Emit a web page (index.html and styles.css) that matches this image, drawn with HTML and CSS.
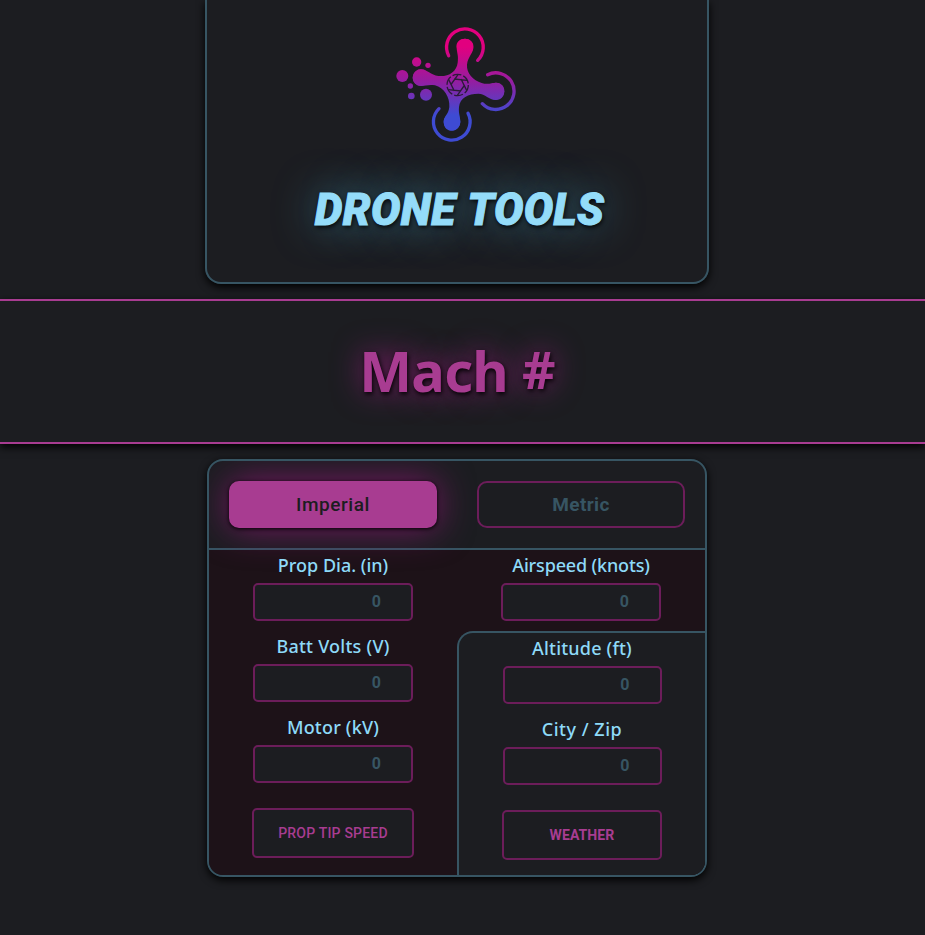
FILE: index.html
```
<!DOCTYPE html>
<html lang="en">
<head>
<meta charset="utf-8">
<title>Drone Tools</title>
<link rel="stylesheet" href="styles.css">
</head>
<body>
<header class="brand">
  <svg class="logo" viewBox="0 0 435 420" aria-hidden="true">
    <defs>
      <linearGradient id="g" gradientUnits="userSpaceOnUse" x1="0" y1="95" x2="0" y2="300">
        <stop offset="0" stop-color="#e2007f"/>
        <stop offset=".5" stop-color="#961da0"/>
        <stop offset="1" stop-color="#3e4bd3"/>
      </linearGradient>
    </defs>
    <g fill="url(#g)">
      <path d="M215 100C208 62 271 62 265 100C263 117 249 125 246 149C244 174 264 195 290 204C309 210 321 203 334 203C367 204 366 254 333 255C312 256 302 236 280 236C250 237 225 247 222 276C220 295 226 304 226 320C224 356 177 357 176 321C176 304 190 300 193 276C195 247 177 218 150 211C131 208 122 213 108 213C76 212 75 166 107 163C125 162 137 181 160 183C190 186 215 170 218 143C221 122 216 115 215 100Z"/>
      <circle cx="240" cy="96" r="24.500"/><circle cx="108" cy="188" r="25"/>
      <circle cx="332" cy="229" r="25.500"/><circle cx="201" cy="321" r="25"/>
      <circle cx="95" cy="141" r="14"/><circle cx="129" cy="151" r="8"/>
      <circle cx="52" cy="183" r="18"/><circle cx="76" cy="213" r="8"/>
      <circle cx="79" cy="243" r="10"/><circle cx="123" cy="239" r="18"/>
    </g>
    <g fill="none" stroke="url(#g)" stroke-width="10" stroke-linecap="round">
      <path d="M191 122A55 55 0 1 1 278 136"/>
      <path d="M308 179A55 55 0 1 1 292 266"/>
      <path d="M162 281A55 55 0 1 0 249 295"/>
    </g>
    <g fill="none" stroke="#2b1b38" stroke-width="4">
      <circle cx="218" cy="210" r="32" stroke-dasharray="27 6.5"/>
      <path d="M208 192L246 196M228 192L245 226M239 210L217 241M228 228L190 224M208 228L191 194M197 210L219 179"/>
    </g>
  </svg>
  <h1 class="title">DRONE TOOLS</h1>
</header>
<section class="result"><h2 class="mach">Mach <span class="hash">#</span></h2></section>
<main class="panel">
  <div class="units">
    <button class="unit active">Imperial</button>
    <button class="unit">Metric</button>
  </div>
  <div class="fields">
    <div class="column">
      <label class="field"><span class="label prop">Prop Dia. (in)</span><input placeholder="0"></label>
      <label class="field"><span class="label volts">Batt Volts (V)</span><input placeholder="0"></label>
      <label class="field"><span class="label motor">Motor (kV)</span><input placeholder="0"></label>
      <button class="action">PROP TIP SPEED</button>
    </div>
    <div class="column">
      <label class="field"><span class="label air">Airspeed (knots)</span><input placeholder="0"></label>
      <div class="weather">
        <label class="field"><span class="label alt">Altitude (ft)</span><input placeholder="0"></label>
        <label class="field"><span class="label city">City / Zip</span><input placeholder="0"></label>
        <button class="action bold">WEATHER</button>
      </div>
    </div>
  </div>
</main>
</body>
</html>
```
FILE: styles.css
```
* { box-sizing: border-box; }
body {
  margin: 0;
  height: 935px;
  overflow: hidden;
  background: #1c1d21;
  font-family: "Noto Sans", sans-serif;
}
.brand {
  width: 504px;
  height: 284px;
  margin: 0 0 0 205px;
  padding-top: 15px;
  border: 2px solid #375563;
  border-top: 0;
  border-radius: 0 0 16px 16px;
  box-shadow: 0 3px 8px #000;
  display: flex;
  flex-direction: column;
  align-items: center;
}
.logo { width: 145px; height: 140px; flex: none; }
.title {
  margin: 28px 0 0 5px;
  font: italic 900 44px/54px Roboto, sans-serif;
  letter-spacing: .35px;
  word-spacing: 2px;
  -webkit-text-stroke: 1px #94dcf9;
  white-space: nowrap;
  color: #94dcf9;
  text-shadow: 1px 2px 5px #000, 0 0 40px #37788f;
}
.result {
  height: 145px;
  margin-top: 15px;
  padding: 0 11px 3px 0;
  border: solid #a83c91;
  border-width: 2px 0;
  background: #1c1d21;
  box-shadow: 0 3px 8px #000;
  display: flex;
  align-items: center;
  justify-content: center;
}
.mach {
  margin: 0;
  font: 700 56px/76px "Noto Sans", sans-serif;
  letter-spacing: -.7px;
  color: #a83c91;
  text-shadow: 1px 2px 5px #000, 0 0 30px #8a1d74;
}
.hash { font-size: 52px; line-height: 1; position: relative; top: -3px; }
.panel {
  width: 500px;
  height: 418px;
  margin: 15px 0 0 207px;
  border: 2px solid #375563;
  border-radius: 16px;
  overflow: hidden;
  background: #1c1d21;
  box-shadow: 0 3px 8px #000;
}
.units {
  height: 89px;
  padding: 20px;
  border-bottom: 2px solid #375563;
  display: flex;
  gap: 40px;
}
.unit {
  width: 208px;
  height: 47px;
  padding: 0;
  border: 2px solid #6c1d5a;
  border-radius: 10px;
  background: #1c1d21;
  color: #375563;
  font: 700 19px Roboto, sans-serif;
  letter-spacing: .35px;
}
.unit.active {
  border-color: #a83c91;
  background: #a83c91;
  color: #1c1d21;
  font-weight: 500;
  letter-spacing: .55px;
  box-shadow: 0 1px 4px #000, 0 0 36px #7c1767;
}
.fields {
  height: 325px;
  display: grid;
  grid-template-columns: 248px 248px;
  background: #1d1218;
}
.column { display: flex; flex-direction: column; align-items: center; }
.field {
  height: 81px;
  padding-top: 3px;
  display: flex;
  flex-direction: column;
  align-items: center;
}
.label {
  height: 30px;
  font-size: 18px;
  font-weight: 500;
  line-height: 24px;
  color: #8edaf8;
  white-space: nowrap;
}
.volts { letter-spacing: .25px; }
.motor, .alt { letter-spacing: .2px; }
.air { letter-spacing: -.15px; }
.city { letter-spacing: .5px; }
input {
  width: 160px;
  height: 38px;
  padding: 0 30px 2px;
  border: 2px solid #6c1d5a;
  border-radius: 5px;
  background: #1c1d21;
  font: 700 16px Roboto, sans-serif;
  text-align: right;
}
input::placeholder { color: #375563; opacity: 1; }
.action {
  width: 162px;
  height: 50px;
  margin-top: 15px;
  padding: 0;
  border: 2px solid #6c1d5a;
  border-radius: 5px;
  background: #1c1d21;
  color: #a83c91;
  font: 500 14px Roboto, "Noto Sans", sans-serif;
  letter-spacing: .2px;
}
.bold { width: 160px; font-weight: 700; letter-spacing: .1px; }
.weather {
  width: 248px;
  height: 246px;
  border: 2px solid #375563;
  border-width: 2px 0 0 2px;
  border-radius: 16px 0 0 0;
  background: #1c1d21;
  display: flex;
  flex-direction: column;
  align-items: center;
}
.weather input { width: 159px; }
```
